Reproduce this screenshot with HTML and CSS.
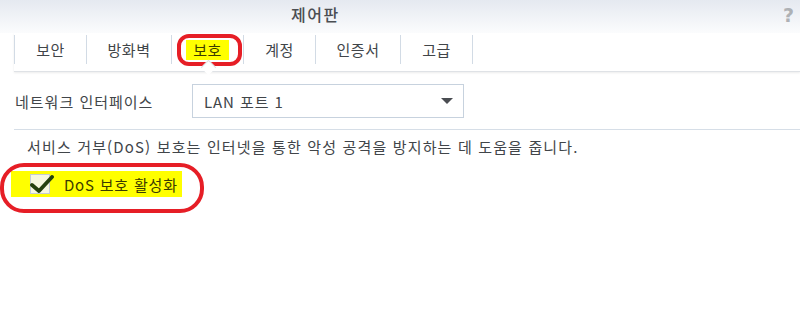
FILE: index.html
```html
<!DOCTYPE html>
<html lang="ko">
<head>
    <meta charset="UTF-8">
    <title>제어판</title>
    <link rel="stylesheet" href="styles.css">
</head>
<body>
    <div class="window">
        <div class="titlebar">
            <span class="title">제어판</span>
            <span class="help">?</span>
        </div>
        <div class="tabbar">
            <div class="tab">보안</div>
            <div class="tab wide">방화벽</div>
            <div class="tab active"><span class="mark">보호</span></div>
            <div class="tab">계정</div>
            <div class="tab wide">인증서</div>
            <div class="tab">고급</div>
            <div class="tab-end"></div>
        </div>
        <div class="content">
            <div class="field">
                <label class="field-label">네트워크 인터페이스</label>
                <div class="select">
                    <span>LAN 포트 1</span>
                    <span class="caret"></span>
                </div>
            </div>
            <div class="divider"></div>
            <p class="desc">서비스 거부(DoS) 보호는 인터넷을 통한 악성 공격을 방지하는 데 도움을 줍니다.</p>
            <div class="check-row">
                <span class="mark check">
                    <span class="box">
                        <svg viewBox="0 0 24 20" width="24" height="20">
                            <path d="M2 10 L9 16 L22 2" fill="none" stroke="#25400f" stroke-width="3.8" stroke-linecap="round" stroke-linejoin="round"/>
                        </svg>
                    </span>
                    <span class="check-label">DoS 보호 활성화</span>
                </span>
            </div>
        </div>
    </div>
</body>
</html>
```

FILE: styles.css
```css
body {
    margin: 0;
    font-family: "Noto Sans CJK KR", "Noto Sans", sans-serif;
    color: #414549;
    background: #fff;
}

.window {
    width: 800px;
    height: 329px;
    overflow: hidden;
}

.titlebar {
    height: 33px;
    display: flex;
    align-items: center;
    background: linear-gradient(#e5e9f0, #fbfcfd);
    position: relative;
}

.title {
    padding-left: 291px;
    font-size: 16px;
    font-weight: 500;
    letter-spacing: 1.5px;
    color: #4b4e52;
    line-height: 20px;
    margin-top: -5px;
}

.help {
    position: absolute;
    right: 6px;
    top: 4px;
    font-family: "DejaVu Sans", sans-serif;
    font-weight: bold;
    font-size: 19px;
    color: #aeb1b5;
}

.tabbar {
    margin-left: 14px;
    height: 38px;
    display: flex;
    border-bottom: 1px solid #dfe2e6;
    box-shadow: 0 1px 2px rgba(0, 0, 0, 0.08);
}

.tab {
    position: relative;
    margin-top: 2px;
    width: 71px;
    height: 29px;
    line-height: 29px;
    text-align: center;
    font-size: 15px;
    letter-spacing: 0.5px;
    color: #414549;
    border-left: 1px solid #d2dbe5;
}

.tab.wide {
    width: 84px;
}

.tab-end {
    margin-top: 2px;
    height: 29px;
    border-left: 1px solid #d2dbe5;
}

.tab.active::before {
    content: '';
    position: absolute;
    left: 5px;
    right: 1px;
    top: -1px;
    bottom: -2px;
    border: 4px solid #e61e26;
    border-radius: 12px;
}

.tab.active::after {
    content: '';
    position: absolute;
    left: 31px;
    bottom: -9px;
    width: 10px;
    height: 10px;
    background: #fff;
    border-left: 1px solid #dfe2e6;
    border-top: 1px solid #dfe2e6;
    transform: rotate(45deg);
}

.mark {
    background: #ffff00;
}

.tab .mark {
    display: inline-block;
    line-height: 20px;
    padding: 0 7px 0 7px;
    color: #3b3b00;
}

.content {
    padding-left: 14px;
}

.field {
    display: flex;
    align-items: center;
    margin-top: 12px;
}

.field-label {
    width: 177px;
    padding-left: 1px;
    font-size: 15px;
    letter-spacing: 1px;
}

.select {
    box-sizing: border-box;
    width: 272px;
    height: 34px;
    border: 1px solid #c7d2de;
    display: flex;
    align-items: center;
    justify-content: space-between;
    padding: 0 10px 0 11px;
    font-size: 15px;
    letter-spacing: 0.9px;
}

.caret {
    width: 0;
    height: 0;
    border-left: 6px solid transparent;
    border-right: 6px solid transparent;
    border-top: 6px solid #4a4d52;
}

.divider {
    margin-top: 11px;
    height: 1px;
    background: #d6dee7;
}

.desc {
    margin: 7px 0 0 13px;
    font-size: 15px;
    letter-spacing: 1.15px;
    line-height: 20px;
}

.check-row {
    position: relative;
    margin-top: 14px;
    margin-left: -3px;
    height: 26px;
}

.check-row::before {
    content: '';
    position: absolute;
    left: -11px;
    top: -8px;
    width: 196px;
    height: 42px;
    border: 4px solid #e61e26;
    border-radius: 24px;
}

.check {
    display: inline-flex;
    align-items: center;
    height: 26px;
    padding: 0 4px 0 19px;
}

.box {
    position: relative;
    width: 18px;
    height: 18px;
    border: 1px solid #c4ccd4;
    background: #f6f7e0;
}

.box svg {
    position: absolute;
    left: -1px;
    top: 0;
}

.check-label {
    margin-left: 14px;
    font-size: 15px;
    letter-spacing: 0.8px;
    color: #3b3b00;
}
```
